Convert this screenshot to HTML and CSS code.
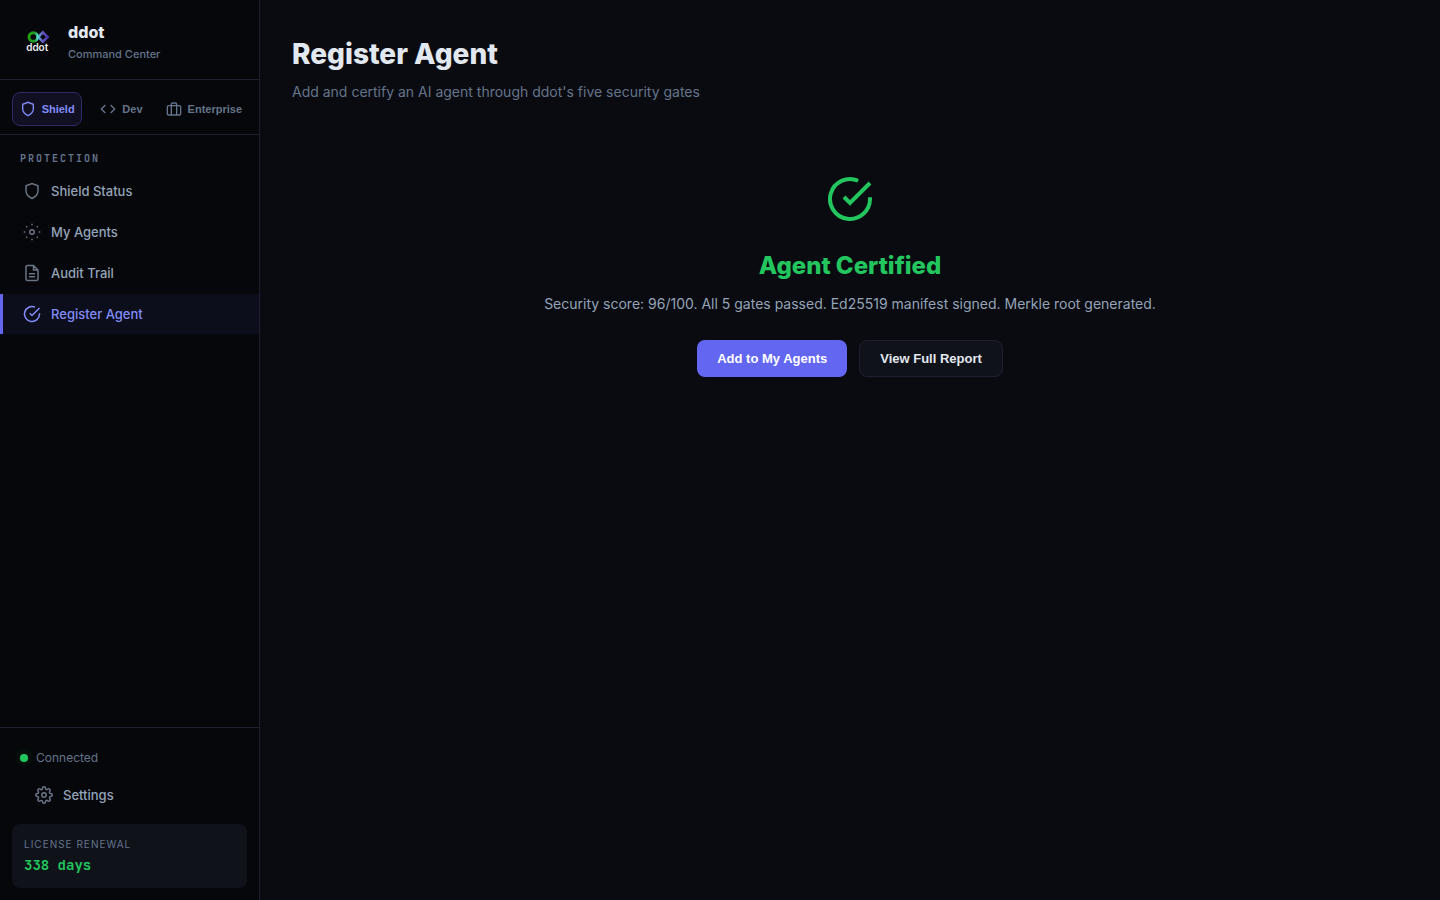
FILE: index.html
```html
<!DOCTYPE html>
<html lang="en">
<head>
<meta charset="utf-8">
<title>ddot Command Center</title>
<link rel="stylesheet" href="styles.css">
</head>
<body>
<div class="app">
  <aside class="sidebar">
    <header class="brand">
      <svg class="brand-logo" viewBox="0 0 36 36" aria-hidden="true">
        <defs>
          <linearGradient id="ring" x1="0" y1="0" x2="1" y2="0"><stop offset="0" stop-color="#22a012"/><stop offset="0.7" stop-color="#1f9a2c"/><stop offset="1" stop-color="#4fd6c0"/></linearGradient>
          <linearGradient id="gem" x1="0" y1="0" x2="1" y2="0"><stop offset="0" stop-color="#4fb8c8"/><stop offset="0.4" stop-color="#6a5fc4"/><stop offset="1" stop-color="#4c35a8"/></linearGradient>
        </defs>
        <circle cx="13.300" cy="15" r="4.300" fill="none" stroke="url(#ring)" stroke-width="2.900"/>
        <path d="M22.900 10.300 27.700 15 22.900 19.700 18.200 15Z" fill="none" stroke="url(#gem)" stroke-width="2.500"/>
        <circle cx="18" cy="15" r="1.300" fill="#58d8c8" stroke="none"/>
        <text class="logo-word" x="17.200" y="28.500" text-anchor="middle">ddot</text>
      </svg>
      <div class="brand-text">
        <div class="brand-name">ddot</div>
        <div class="brand-sub">Command Center</div>
      </div>
    </header>
    <div class="modes">
      <button class="mode mode-active" type="button">
        <svg class="icon-md" viewBox="0 0 24 24"><path d="M12 22s8-4 8-10V5l-8-3-8 3v7c0 6 8 10 8 10z"/></svg>Shield</button>
      <button class="mode" type="button">
        <svg class="icon-md" viewBox="0 0 24 24"><path d="m16 18 6-6-6-6M8 6l-6 6 6 6"/></svg>Dev</button>
      <button class="mode" type="button">
        <svg class="icon-md" viewBox="0 0 24 24"><rect x="2" y="7" width="20" height="14" rx="2"/><path d="M16 21V5a2 2 0 0 0-2-2h-4a2 2 0 0 0-2 2v16"/></svg>Enterprise</button>
    </div>
    <nav class="nav">
      <div class="nav-label">PROTECTION</div>
      <a class="nav-item" href="#status"><svg class="icon" viewBox="0 0 24 24"><path d="M12 22s8-4 8-10V5l-8-3-8 3v7c0 6 8 10 8 10z"/></svg>Shield Status</a>
      <a class="nav-item" href="#agents"><svg class="icon" viewBox="0 0 24 24"><circle cx="12" cy="12" r="3"/><path d="M12 1v2M12 21v2M4.220 4.220l1.420 1.420M18.360 18.360l1.420 1.420M1 12h2M21 12h2M4.220 19.780l1.420-1.420M18.360 5.640l1.420-1.420"/></svg>My Agents</a>
      <a class="nav-item" href="#audit"><svg class="icon" viewBox="0 0 24 24"><path d="M14 2H6a2 2 0 0 0-2 2v16a2 2 0 0 0 2 2h12a2 2 0 0 0 2-2V8zM14 2v6h6M16 13H8M16 17H8"/></svg>Audit Trail</a>
      <a class="nav-item nav-active" href="#register" aria-current="page"><svg class="icon" viewBox="0 0 24 24"><path d="M22 11.080V12a10 10 0 1 1-5.930-9.140M22 4 12 14.010l-3-3"/></svg>Register Agent</a>
    </nav>
    <footer class="side-foot">
      <div class="status"><span class="dot"></span>Connected</div>
      <a class="nav-item" href="#settings"><svg class="icon" viewBox="0 0 24 24"><circle cx="12" cy="12" r="3"/><path d="M19.400 15a1.650 1.650 0 0 0 .33 1.820l.06.06a2 2 0 1 1-2.830 2.830l-.06-.06a1.650 1.650 0 0 0-1.820-.33 1.650 1.650 0 0 0-1 1.510V21a2 2 0 0 1-4 0v-.09A1.650 1.650 0 0 0 9 19.400a1.650 1.650 0 0 0-1.820.33l-.06.06a2 2 0 1 1-2.830-2.830l.06-.06a1.650 1.650 0 0 0 .33-1.820 1.650 1.650 0 0 0-1.510-1H3a2 2 0 0 1 0-4h.09A1.650 1.650 0 0 0 4.600 9a1.650 1.650 0 0 0-.33-1.820l-.06-.06a2 2 0 1 1 2.830-2.830l.06.06a1.650 1.650 0 0 0 1.820.33H9a1.650 1.650 0 0 0 1-1.510V3a2 2 0 0 1 4 0v.09a1.650 1.650 0 0 0 1 1.510 1.650 1.650 0 0 0 1.820-.33l.06-.06a2 2 0 1 1 2.830 2.830l-.06.06a1.650 1.650 0 0 0-.33 1.820V9a1.650 1.650 0 0 0 1.510 1H21a2 2 0 0 1 0 4h-.09a1.650 1.650 0 0 0-1.510 1z"/></svg>Settings</a>
      <div class="license">
        <div class="license-label">LICENSE RENEWAL</div>
        <div class="license-days">338 days</div>
      </div>
    </footer>
  </aside>
  <main class="main">
    <h1 class="title">Register Agent</h1>
    <p class="subtitle">Add and certify an AI agent through ddot's five security gates</p>
    <section class="result">
      <svg class="result-icon" viewBox="0 0 24 24" aria-hidden="true"><path d="M22 11.080V12a10 10 0 1 1-5.930-9.140M22 4 12 14.010l-3-3"/></svg>
      <h2 class="result-title">Agent Certified</h2>
      <p class="result-text">Security score: 96/100. All 5 gates passed. Ed25519 manifest signed. Merkle root generated.</p>
      <div class="actions">
        <button class="btn btn-primary" type="button">Add to My Agents</button>
        <button class="btn" type="button">View Full Report</button>
      </div>
    </section>
  </main>
</div>
</body>
</html>
```
FILE: styles.css
```css
* { box-sizing: border-box; margin: 0; }
body {
  background: #0a0b10;
  color: #e2e8f0;
  font-family: Inter, sans-serif;
  font-size: 14px;
}
.app { display: flex; min-height: 100vh; }
svg { flex: none; fill: none; stroke: currentColor; stroke-width: 2; }

.sidebar {
  display: flex;
  flex-direction: column;
  flex: none;
  width: 260px;
  background: #06070a;
  border-right: 1px solid #1e2030;
}
.brand {
  display: flex;
  align-items: center;
  gap: 12px;
  padding: 20px;
  height: 80px;
  border-bottom: 1px solid #1e2030;
}
.brand-logo { width: 36px; height: 36px; }
.logo-word { font: 600 10px Inter, sans-serif; fill: #e8ecf0; stroke: none; }
.brand-text { padding-top: 4px; }
.brand-name { font-size: 16px; font-weight: 800; line-height: 24px; }
.brand-sub { margin-top: 1px; font-size: 11px; font-weight: 500; line-height: 18px; color: #64748b; }

.modes {
  display: flex;
  gap: 4px;
  padding: 12px 12px 8px;
  border-bottom: 1px solid #1e2030;
}
.mode {
  display: flex;
  align-items: center;
  justify-content: center;
  gap: 6px;
  height: 34px;
  padding: 0 4px;
  border: 1px solid transparent;
  border-radius: 8px;
  background: none;
  color: #64748b;
  font: 600 11px "Liberation Sans", Arial, sans-serif;
  flex: 1 1 0;
}
.mode-active { background: #101022; border-color: #2b2c66; color: #818cf8; }
.icon-md { width: 16px; height: 16px; }

.nav { flex: 1; padding-top: 12px; }
.nav-label {
  padding: 5px 20px;
  color: #64748b;
  font: 600 10px/14px "JetBrains Mono", "Roboto Mono", "Liberation Mono", monospace;
  letter-spacing: 2px;
}
.nav-item {
  display: flex;
  align-items: center;
  gap: 10px;
  height: 40px;
  padding: 0 20px;
  margin-bottom: 1px;
  border-left: 3px solid transparent;
  color: #94a3b8;
  font-size: 13px;
  font-weight: 500;
  text-decoration: none;
}
.nav-active { background: #0d0e1c; border-left-color: #6366f1; color: #818cf8; }
.icon { width: 18px; height: 18px; opacity: 0.7; }
.nav-active .icon { opacity: 1; }

.side-foot { padding: 12px; border-top: 1px solid #1e2030; }
.status {
  display: flex;
  align-items: center;
  gap: 8px;
  padding: 8px;
  color: #64748b;
  font-size: 12px;
  line-height: 19px;
}
.dot { width: 8px; height: 8px; border-radius: 50%; background: #22c55e; box-shadow: 0 0 8px #22c55e4d; }
.license { margin-top: 9px; padding: 12px; border-radius: 8px; background: #10121a; }
.license-label { color: #64748b; font-size: 10px; line-height: 16px; letter-spacing: 1px; }
.license-days { color: #22c55e; font: 700 14px/22px "JetBrains Mono", "Roboto Mono", "Liberation Mono", monospace; margin-top: 2px; }

.main { flex: 1; min-width: 0; padding: 32px; }
.title { font-size: 28px; font-weight: 800; line-height: 45px; }
.subtitle { margin-top: 4px; color: #64748b; line-height: 22px; }
.result { display: flex; flex-direction: column; align-items: center; margin-top: 72px; text-align: center; }
.result-icon { width: 48px; height: 48px; color: #22c55e; }
.result-title { margin-top: 24px; color: #22c55e; font-size: 24px; font-weight: 800; line-height: 38px; }
.result-text { margin-top: 8px; color: #94a3b8; line-height: 22px; }
.actions { display: flex; gap: 12px; margin-top: 25px; }
.btn {
  padding: 10px 20px;
  border: 1px solid #1e2030;
  border-radius: 8px;
  background: #10121a;
  color: #e2e8f0;
  font: 600 13px/15px "Liberation Sans", Arial, sans-serif;
}
.btn-primary { background: #6366f1; border: none; color: #fff; }
```
